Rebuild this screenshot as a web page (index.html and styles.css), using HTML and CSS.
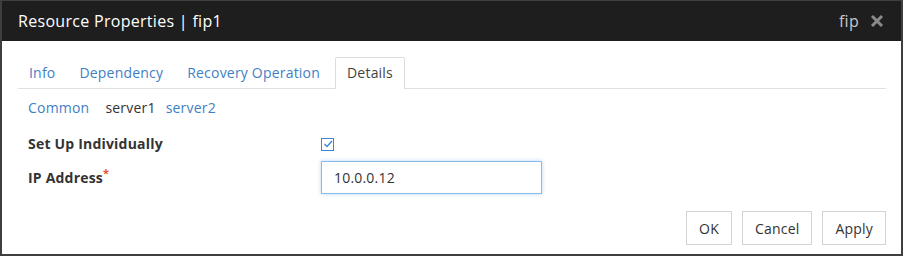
FILE: index.html
```html
<!DOCTYPE html>
<html>
<head>
<meta charset="utf-8">
<link rel="stylesheet" href="styles.css">
</head>
<body>
<div class="dialog">
  <div class="header">
    <span class="title">Resource Properties | fip1</span>
    <span class="hright"><span class="type">fip</span>
      <svg class="close" width="14" height="14" viewBox="0 0 14 14"><path d="M2 2 L12 12 M12 2 L2 12" stroke="#8a8a8a" stroke-width="3" stroke-linecap="butt"/></svg>
    </span>
  </div>
  <div class="body">
    <div class="tabs">
      <a class="tab">Info</a>
      <a class="tab">Dependency</a>
      <a class="tab">Recovery Operation</a>
      <a class="tab active">Details</a>
    </div>
    <div class="subnav">
      <a class="sub link">Common</a>
      <span class="sub cur">server1</span>
      <a class="sub link">server2</a>
    </div>
    <div class="form">
      <div class="row row-chk">
        <label class="lbl">Set Up Individually</label>
        <span class="chk"><svg width="10" height="10" viewBox="0 0 10 10"><path d="M1.5 5 L4 7.5 L9 2" fill="none" stroke="#3a87d6" stroke-width="1.4"/></svg></span>
      </div>
      <div class="row row-ip">
        <label class="lbl">IP Address<span class="req">*</span></label>
        <div class="input">10.0.0.12</div>
      </div>
    </div>
    <div class="footer">
      <button class="btn btn-ok">OK</button>
      <button class="btn">Cancel</button>
      <button class="btn">Apply</button>
    </div>
  </div>
</div>
</body>
</html>
```
FILE: styles.css
```css
* { box-sizing: border-box; }
html, body { margin: 0; padding: 0; background: #fff; }
body { font-family: "Open Sans", "Noto Sans", sans-serif; font-size: 14px; letter-spacing: 0.2px; color: #333; }
.dialog {
  width: 903px; height: 256px;
  border: 2px solid #3f3f3f; border-top: 1px solid #3f3f3f;
  display: flex; flex-direction: column;
}
.header {
  background: #1e1e1e; height: 40px;
  display: flex; align-items: center; justify-content: space-between;
  padding: 0 17px 0 16px;
}
.title { color: #fff; font-size: 16px; letter-spacing: 0.3px; }
.hright { display: flex; align-items: center; gap: 11px; }
.type { color: #c8c8c8; font-size: 16px; letter-spacing: 0.3px; }
.close { display: block; }
.body { flex: 1; padding: 16px 15px 0 16px; display: flex; flex-direction: column; }
.tabs { display: flex; border-bottom: 1px solid #e0e0e0; height: 32px; }
.tab {
  color: #3f80c5; padding: 0 11px; line-height: 30px;
  border: 1px solid transparent; border-bottom: none; margin-bottom: -1px;
}
.tab:first-child { padding-left: 10px; }
.tab.active { color: #444; border-color: #dcdcdc; background: #fff; height: 32px; border-radius: 2px 2px 0 0; margin-left: 3px; }
.subnav { display: flex; margin-top: 8px; padding-left: 10px; height: 20px; align-items: center; }
.sub { margin-right: 10px; }
.sub.link { color: #3f80c5; }
.sub.cur { margin-left: 6px; margin-right: 10px; color: #333; }
.form { margin-top: 7px; padding-left: 10px; }
.row { display: flex; align-items: center; }
.row-chk { height: 22px; margin-top: 9px; }
.row-ip { height: 33px; margin-top: 6px; }
.lbl { width: 293px; font-weight: bold; color: #333; line-height: 20px; }
.req { color: #e5502f; font-size: 11px; vertical-align: 6px; line-height: 0; }
.chk {
  width: 13px; height: 13px; border: 1px solid #3a87d6;
  display: flex; align-items: center; justify-content: center;
}
.chk svg { display: block; }
.input {
  width: 221px; height: 33px; border: 1px solid #8bbbea;
  box-shadow: 0 0 4px rgba(100,160,230,0.45);
  padding: 0 12px; line-height: 31px; color: #333;
}
.footer { display: flex; justify-content: flex-end; gap: 10px; margin-top: 17px; }
.btn {
  font-family: inherit; font-size: 14px; letter-spacing: 0.2px; color: #333;
  background: #fff; border: 1px solid #d4d4d4; height: 34px; padding: 0 12px;
}
.btn-ok { padding: 0 12px; }
```
